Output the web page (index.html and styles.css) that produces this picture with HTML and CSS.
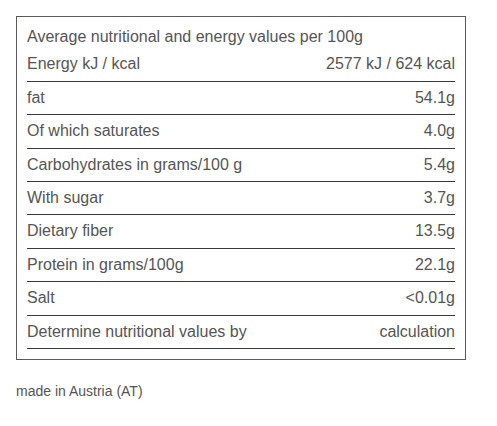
FILE: index.html
```html
<!DOCTYPE html>
<html lang="en">
<head>
<meta charset="utf-8">
<title>Nutrition values</title>
<link rel="stylesheet" href="styles.css">
</head>
<body>
<div class="page">
  <div class="nutrition">
    <div class="heading">Average nutritional and energy values per 100g</div>
    <div class="row"><span>Energy kJ / kcal</span><span>2577 kJ / 624 kcal</span></div>
    <div class="row"><span>fat</span><span>54.1g</span></div>
    <div class="row"><span>Of which saturates</span><span>4.0g</span></div>
    <div class="row"><span>Carbohydrates in grams/100 g</span><span>5.4g</span></div>
    <div class="row"><span>With sugar</span><span>3.7g</span></div>
    <div class="row"><span>Dietary fiber</span><span>13.5g</span></div>
    <div class="row"><span>Protein in grams/100g</span><span>22.1g</span></div>
    <div class="row"><span>Salt</span><span>&lt;0.01g</span></div>
    <div class="row"><span>Determine nutritional values by</span><span>calculation</span></div>
  </div>
  <p class="origin">made in Austria (AT)</p>
</div>
</body>
</html>
```
FILE: styles.css
```css
html, body {
  margin: 0;
  padding: 0;
  background: #fff;
}
body {
  font-family: "Liberation Sans", Arial, sans-serif;
  color: #555;
}
.page {
  padding: 16px;
}
.nutrition {
  width: 450px;
  box-sizing: border-box;
  border: 1px solid #5a5a5a;
  padding: 10px;
  font-size: 16px;
  line-height: 18.4px;
}
.heading {
  padding: 1px 0 2px;
}
.row {
  display: flex;
  justify-content: space-between;
  padding: 7px 0;
  border-bottom: 1px solid #3a3a3a;
}
.origin {
  margin: 23px 0 0;
  font-size: 14px;
  line-height: 16px;
}
```
